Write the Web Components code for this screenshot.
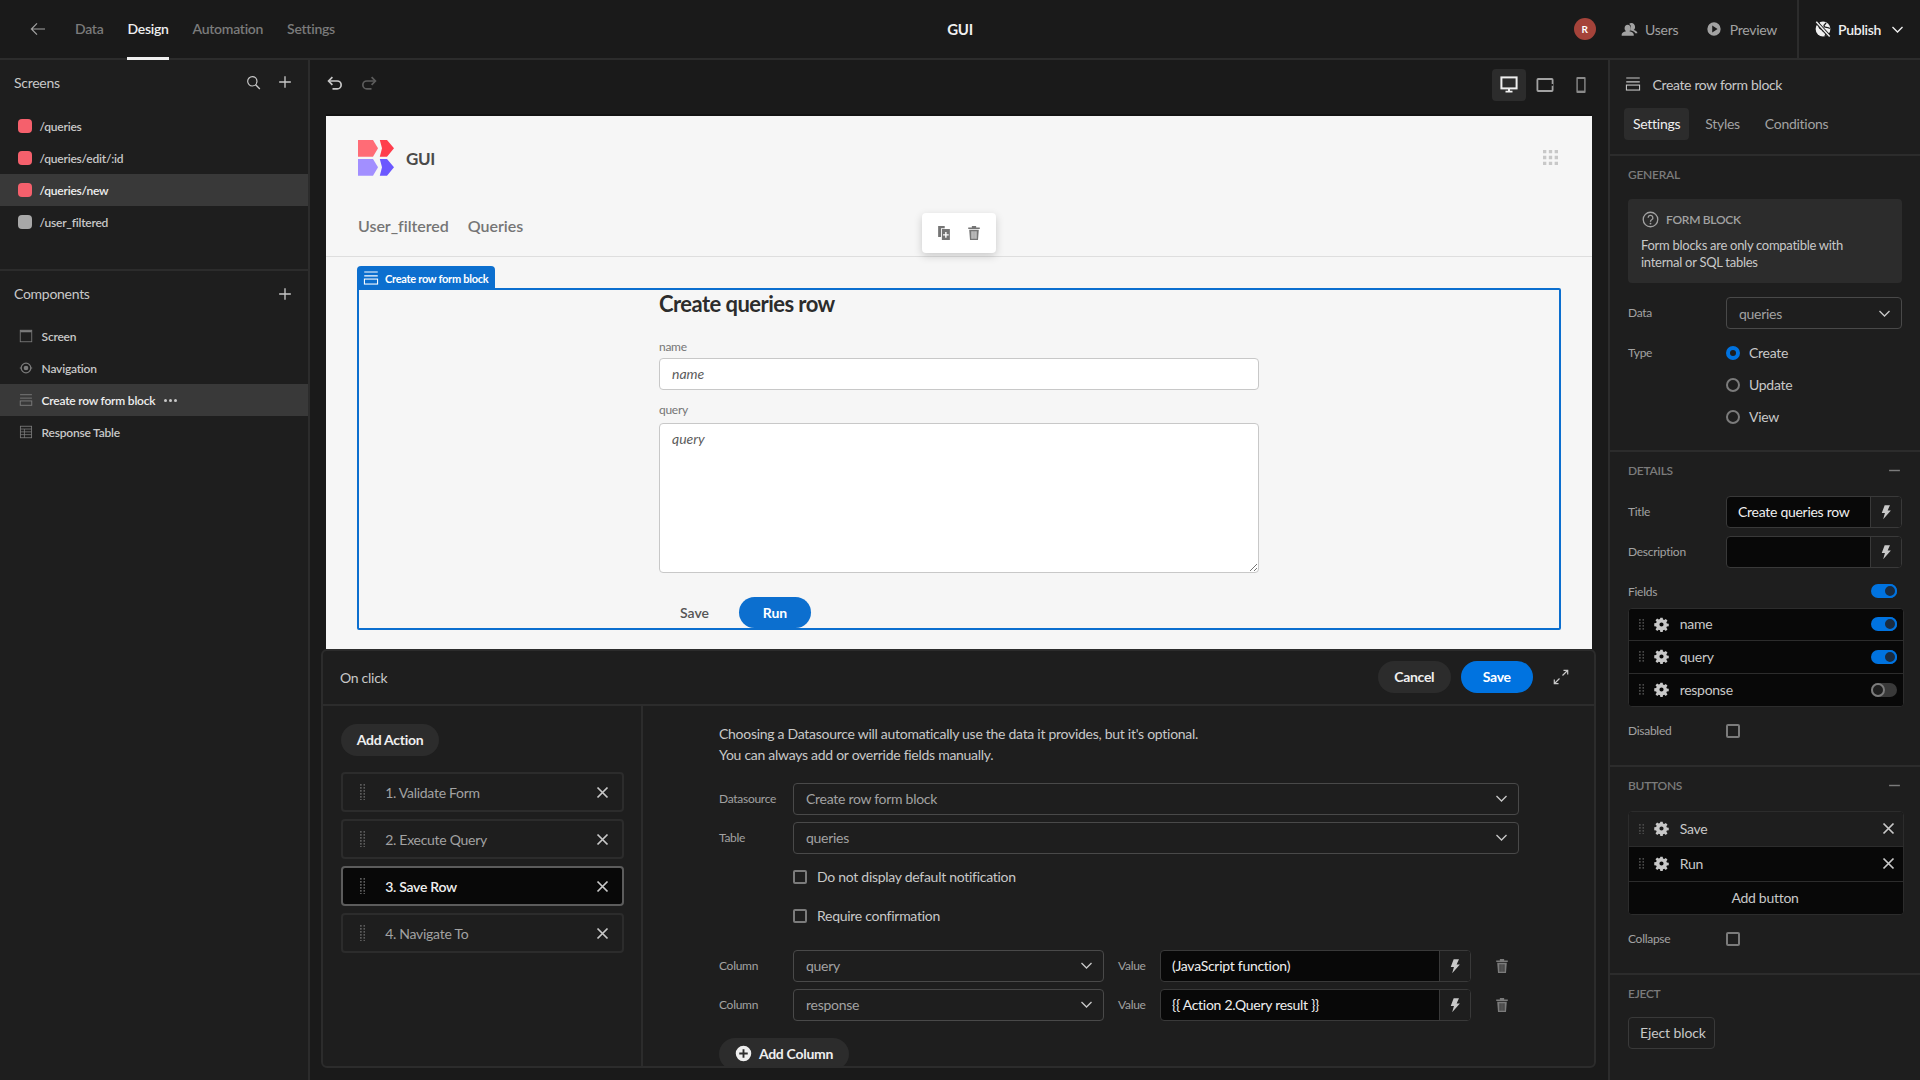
<!DOCTYPE html>
<html lang="en">
<head>
<meta charset="utf-8">
<title>GUI</title>
<style>
html,body{margin:0;padding:0;background:#1a1a1a;height:1080px;overflow:hidden}
body{font-family:Lato,"Liberation Sans",sans-serif;font-size:14px;letter-spacing:-.28px;color:#c8c8c8;-webkit-font-smoothing:antialiased}
</style>
</head>
<body>
<bb-app>
  <bb-topbar slot="top"></bb-topbar>

  <bb-side slot="left">
    <bb-side-head style="height:46px">Screens<bb-icon slot="actions" name="search" size="15"></bb-icon><bb-icon slot="actions" name="plus" size="14"></bb-icon></bb-side-head>
    <bb-tree pad="4px 0 31px" border>
      <bb-tree-row swatch="#f5606c">/queries</bb-tree-row>
      <bb-tree-row swatch="#f5606c">/queries/edit/:id</bb-tree-row>
      <bb-tree-row swatch="#f5606c" selected>/queries/new</bb-tree-row>
      <bb-tree-row swatch="#a8a8a8">/user_filtered</bb-tree-row>
    </bb-tree>
    <bb-side-head style="height:47px">Components<bb-icon slot="actions" name="plus" size="14"></bb-icon></bb-side-head>
    <bb-tree pad="2px 0 0">
      <bb-tree-row icon="window">Screen</bb-tree-row>
      <bb-tree-row icon="eye">Navigation</bb-tree-row>
      <bb-tree-row icon="form" selected more>Create row form block</bb-tree-row>
      <bb-tree-row icon="table">Response Table</bb-tree-row>
    </bb-tree>
  </bb-side>

  <bb-canvas slot="center">
    <bb-canvas-toolbar slot="toolbar"></bb-canvas-toolbar>
    <bb-preview slot="preview">
      <bb-form-block>
        <bb-field label="name"><bb-text-input>name</bb-text-input></bb-field>
        <bb-field label="query" gap="6" style="margin-top:12px"><bb-text-input area>query</bb-text-input></bb-field>
      </bb-form-block>
    </bb-preview>
    <bb-dialog slot="dialog">
      <span slot="title">On click</span>
      <bb-button slot="actions" kind="secondary">Cancel</bb-button>
      <bb-button slot="actions" kind="primary">Save</bb-button>
      <bb-icon slot="expand" name="expand" size="18"></bb-icon>

      <bb-button slot="side" kind="secondary" style="align-self:flex-start;padding:0;margin-bottom:16px;width:98px">Add Action</bb-button>
      <bb-action-row slot="side">1. Validate Form</bb-action-row>
      <bb-action-row slot="side">2. Execute Query</bb-action-row>
      <bb-action-row slot="side" selected>3. Save Row</bb-action-row>
      <bb-action-row slot="side">4. Navigate To</bb-action-row>

      <bb-note>Choosing a Datasource will automatically use the data it provides, but it's optional.<br>You can always add or override fields manually.</bb-note>
      <bb-kv label="Datasource"><bb-select>Create row form block</bb-select></bb-kv>
      <bb-kv label="Table"><bb-select>queries</bb-select></bb-kv>
      <bb-kv><bb-check>Do not display default notification</bb-check></bb-kv>
      <bb-kv><bb-check>Require confirmation</bb-check></bb-kv>
      <bb-column-row style="margin-top:11px" column="query">(JavaScript function)</bb-column-row>
      <bb-column-row column="response">{{ Action 2.Query result }}</bb-column-row>
      <bb-button kind="secondary" icon="plus-circle" style="align-self:flex-start;margin-top:10px;width:130px;padding:0">Add Column</bb-button>
    </bb-dialog>
  </bb-canvas>

  <bb-inspector slot="right">
    <bb-panel-section title="General" style="padding-bottom:17px">
      <bb-info heading="FORM BLOCK">Form blocks are only compatible with internal or SQL tables</bb-info>
      <bb-setting label="Data" style="margin-top:14px"><bb-select>queries</bb-select></bb-setting>
      <bb-setting label="Type" style="margin-top:8px">
        <bb-radio checked>Create</bb-radio>
        <bb-radio>Update</bb-radio>
        <bb-radio>View</bb-radio>
      </bb-setting>
    </bb-panel-section>
    <bb-panel-section title="Details" collapse>
      <bb-setting label="Title"><bb-binding>Create queries row</bb-binding></bb-setting>
      <bb-setting label="Description" style="margin-top:8px"><bb-binding></bb-binding></bb-setting>
      <bb-setting label="Fields" style="margin-top:8px;height:31.5px" split><bb-toggle on></bb-toggle></bb-setting>
      <bb-list>
        <bb-list-row trailing="toggle-on">name</bb-list-row>
        <bb-list-row trailing="toggle-on">query</bb-list-row>
        <bb-list-row trailing="toggle-off">response</bb-list-row>
      </bb-list>
      <bb-setting label="Disabled" style="margin-top:8px"><bb-check></bb-check></bb-setting>
    </bb-panel-section>
    <bb-panel-section title="Buttons" collapse>
      <bb-list>
        <bb-list-row trailing="x" lifted tall>Save</bb-list-row>
        <bb-list-row trailing="x" tall>Run</bb-list-row>
        <bb-list-row center>Add button</bb-list-row>
      </bb-list>
      <bb-setting label="Collapse" style="margin-top:8px"><bb-check></bb-check></bb-setting>
    </bb-panel-section>
    <bb-panel-section title="Eject" last>
      <bb-eject>Eject block</bb-eject>
    </bb-panel-section>
  </bb-inspector>
</bb-app>

<script>
const ICONS = {
  back:`<path d="M16 9H2.6M8 3.4 2.4 9 8 14.6" fill="none" stroke="currentColor" stroke-width="1.2"/>`,
  search:`<circle cx="7.6" cy="7.6" r="5.6" fill="none" stroke="currentColor" stroke-width="1.4"/><path d="M11.6 11.8 16.6 16.8" stroke="currentColor" stroke-width="1.6"/>`,
  plus:`<path d="M9 1.5v15M1.5 9h15" stroke="currentColor" stroke-width="1.7"/>`,
  undo:`<path d="M6.4 2.2 2.6 6l3.8 3.8" fill="none" stroke="currentColor" stroke-width="1.7"/><path d="M3 6h8.2a3.9 3.9 0 0 1 0 7.9H6.5" fill="none" stroke="currentColor" stroke-width="1.7"/>`,
  redo:`<path d="M11.6 2.2 15.4 6l-3.8 3.8" fill="none" stroke="currentColor" stroke-width="1.7"/><path d="M15 6H6.8a3.9 3.9 0 0 0 0 7.9h4.7" fill="none" stroke="currentColor" stroke-width="1.7"/>`,
  desktop:`<rect x="1.4" y="1.4" width="15.200" height="11" fill="none" stroke="currentColor" stroke-width="2"/><path d="M8 13h2v1.800h2.500v1.600h-7v-1.600H8z" fill="currentColor"/>`,
  tablet:`<rect x="1.4" y="3" width="15.200" height="12" rx=".8" fill="none" stroke="currentColor" stroke-width="1.800"/><rect x="15.200" y="8" width="2" height="1.800" fill="#1a1a1a"/>`,
  phone:`<rect x="4.400" y="1" width="9.200" height="16" rx="1" fill="currentColor"/><rect x="5.800" y="3" width="6.400" height="11.600" fill="#1a1a1a"/>`,
  window:`<rect x="1.6" y="1.6" width="14.8" height="14.8" fill="none" stroke="currentColor" stroke-width="1.1"/><rect x="1.6" y="1.6" width="14.8" height="2.6" fill="currentColor"/>`,
  eye:`<circle cx="9" cy="9" r="6.2" fill="none" stroke="currentColor" stroke-width="1.6"/><circle cx="9" cy="9" r="3" fill="currentColor"/><path d="M1 9h2.5M14.5 9H17" stroke="currentColor" stroke-width="1.2"/>`,
  form:`<path d="M1.4 2.2h15.2M1.4 6.6h15.2" stroke="currentColor" stroke-width="1.2"/><rect x="1.6" y="10.2" width="14.8" height="5.6" fill="none" stroke="currentColor" stroke-width="1.2"/>`,
  table:`<rect x="1.8" y="1.6" width="14.4" height="14.8" fill="none" stroke="currentColor" stroke-width="1.1"/><path d="M1.8 5.2h14.4M1.8 8.8h14.4M1.8 12.4h14.4M7 5.2v11.2" stroke="currentColor" stroke-width="1"/>`,
  users:`<path d="M11 2.2c-1 0-1.9.4-2.4 1.1 1.2.5 2 1.9 2 3.3 0 1.3-.5 2.4-1.2 3.2 3.2.6 5.4 1.9 5.6 3.2h2.4c0-1.5-1.6-2.7-4-3.4 1-.6 1.5-1.8 1.5-3.2 0-2.4-1.6-4.2-3.9-4.2z" fill="currentColor"/><path d="M7 4c2 0 3.4 1.5 3.4 3.8 0 1.3-.6 2.4-1.5 3 2.8.6 4.6 2 4.6 3.6v1.2H.7v-1.2c0-1.7 1.9-3 4.6-3.6-.9-.6-1.5-1.7-1.5-3C3.800 5.500 5.100 4 7 4z" fill="currentColor"/>`,
  play:`<path fill-rule="evenodd" fill="currentColor" d="M9 1.500a7.500 7.500 0 1 0 0 15 7.500 7.500 0 0 0 0-15zM7 5.200 13 9l-6 3.800z"/>`,
  publish:`<circle cx="9" cy="9" r="7.4" fill="currentColor"/><path d="M5 2.500c2 3-1.200 3.500.6 5.500s3 1 3.500 3.400M12 2.800c-.7 1.900-2.300 1.600-2 3.400s3.500.6 5.800 2.300M11 16c.2-1.500 1.200-2.200 3-3" fill="none" stroke="#1a1a1a" stroke-width="1.300"/><path d="M2.300 1.800 15.700 16.600" stroke="#1a1a1a" stroke-width="3.400"/><path d="M2.300 1.800 15.700 16.600" stroke="currentColor" stroke-width="1.500"/>`,
  chevron:`<path d="M3 6l6 6 6-6" fill="none" stroke="currentColor" stroke-width="1.600"/>`,
  minus:`<path d="M1.500 9h15" stroke="currentColor" stroke-width="2"/>`,
  x:`<path d="M3 3l12 12M15 3 3 15" stroke="currentColor" stroke-width="2.100"/>`,
  bolt:`<path d="M7.500 1.500H13.500L10.800 7.200H14.500L5.800 17.200 7.800 10.200H4.200z" fill="currentColor"/>`,
  trash:`<path fill="currentColor" fill-rule="evenodd" d="M6.600 1.200h4.800v1.500h4.100V4.400h-13V2.700h4.100zM3.600 5.400h10.800L13.500 17h-9zM6.300 7v8.400h1V7zM8.500 7v8.400h1V7zM10.700 7v8.400h1V7z"/>`,
  duplicate:`<path fill="currentColor" d="M2.400 1h7.400v2.600H5.600v10H2.400z"/><path fill="currentColor" fill-rule="evenodd" d="M6.600 4.600h9V17h-9zM10.300 7.800v2.500H7.900v1.500h2.400v2.500h1.600v-2.500h2.400v-1.500h-2.400V7.800z"/>`,
  question:`<circle cx="9" cy="9" r="7.700" fill="none" stroke="currentColor" stroke-width="1.400"/><path d="M6.500 7.200a2.500 2.500 0 1 1 3.700 2.100c-.9.500-1.200 1-1.200 2" fill="none" stroke="currentColor" stroke-width="1.400"/><circle cx="9" cy="13.300" r=".95" fill="currentColor"/>`,
  expand:`<path d="M10.500 7.500 15.500 2.500M11.500 2.300h4.200v4.200M7.500 10.500l-5 5M6.500 15.700H2.300v-4.200" fill="none" stroke="currentColor" stroke-width="1.200"/>`,
  'plus-circle':`<path fill="currentColor" fill-rule="evenodd" d="M9 .800a8.200 8.200 0 1 0 0 16.400A8.200 8.200 0 0 0 9 .800zM8 4.500h2V8h3.500v2H10v3.500H8V10H4.500V8H8z"/>`,
  gear:`<path fill="currentColor" fill-rule="evenodd" d="M7.600.800h2.800l.4 2.300 1.500.6 1.900-1.300 2 2-1.400 1.900.6 1.500 2.300.4v2.800l-2.300.4-.6 1.500 1.400 1.900-2 2-1.900-1.400-1.500.6-.4 2.300H7.600l-.4-2.300-1.500-.6-1.900 1.400-2-2 1.400-1.900-.6-1.500-2.300-.4V7.600l2.300-.4.6-1.500-1.400-1.900 2-2 1.900 1.300 1.500-.6zM9 6.500a2.500 2.500 0 1 0 0 5 2.500 2.500 0 0 0 0-5z"/>`,
  grid:`<path fill="currentColor" d="M0 0h4v4H0zM7 0h4v4H7zM14 0h4v4h-4zM0 7h4v4H0zM7 7h4v4H7zM14 7h4v4h-4zM0 14h4v4H0zM7 14h4v4H7zM14 14h4v4h-4z"/>`
};

function def(name, css, render){
  customElements.define(name, class extends HTMLElement{
    connectedCallback(){
      if(this.shadowRoot) return;
      const root=this.attachShadow({mode:'open'});
      root.innerHTML=`<style>:host{display:block;box-sizing:border-box}*,*::before,*::after{box-sizing:border-box}${css}</style>${render(this)}`;
    }
  });
}
const attr=(e,n,d='')=>e.getAttribute(n)??d;

def('bb-icon',`:host{display:inline-flex;flex:none;line-height:0}svg{display:block}`,e=>{
  const s=attr(e,'size','18');
  return `<svg xmlns="http://www.w3.org/2000/svg" width="${s}" height="${attr(e,'h',s)}" viewBox="0 0 18 18">${ICONS[attr(e,'name')]||''}</svg>`;
});

def('bb-grip',`:host{display:inline-flex;flex:none;line-height:0;color:#5c5c5c}`,e=>{
  const rows=+attr(e,'rows','6');let r='';
  for(let i=0;i<rows;i++){r+=`<rect x="0" y="${i*3}" width="1.700" height="1.700"/><rect x="3.500" y="${i*3}" width="1.700" height="1.700"/>`}
  return `<svg width="5.200" height="${rows*3-1.300}" fill="currentColor">${r}</svg>`;
});

def('bb-app',`:host{display:grid;grid-template:60px 1020px/310px 1fr 312px;width:1920px;height:1080px;background:#1a1a1a;overflow:hidden}
 ::slotted([slot=top]){grid-column:1/4}`,
 ()=>`<slot name="top"></slot><slot name="left"></slot><slot name="center"></slot><slot name="right"></slot>`);

def('bb-topbar',`:host{display:flex;align-items:center;height:60px;border-bottom:2px solid #2c2c2c;background:#1a1a1a;color:#7b7b7b}
 .left{display:flex;align-items:center;height:100%;flex:1}
 .left bb-icon{margin-left:29px}
 nav{display:flex;height:100%;margin-left:28px;gap:24px}
 a{display:flex;align-items:center;height:60px;font-weight:600;font-size:14px;border-bottom:2px solid transparent;padding-bottom:1px}
 a.on{color:#efefef;border-bottom:3px solid #efefef;padding-top:1px}
 .title{flex:none;font-size:15px;font-weight:700;color:#efefef;line-height:58px;width:60px;text-align:center}
 .right{flex:1;display:flex;align-items:center;justify-content:flex-end;height:100%}
 .av{width:22px;height:22px;border-radius:50%;background:#a5433a;color:#fff;font-size:10px;font-weight:700;display:flex;align-items:center;justify-content:center;margin-right:25px}
 .it{display:flex;align-items:center;gap:7.500px;color:#a2a2a2;font-size:14px}
 .it.u{margin-right:28px}.it.p{margin-right:20px}
 .pub{display:flex;align-items:center;height:100%;width:123px;border-left:2px solid #2c2c2c;padding-left:15px;color:#efefef;font-weight:600;font-size:14px;gap:6px}
 .pub .ch{margin-left:3px}`,
 ()=>`<div class="left"><bb-icon name="back" size="18" style="color:#a2a2a2"></bb-icon><nav><a>Data</a><a class="on">Design</a><a>Automation</a><a>Settings</a></nav></div>
 <div class="title">GUI</div>
 <div class="right"><div class="av">R</div>
  <div class="it u"><bb-icon name="users" size="17"></bb-icon><span>Users</span></div>
  <div class="it p"><bb-icon name="play" size="16"></bb-icon><span>Preview</span></div>
  <div class="pub"><bb-icon name="publish" size="18"></bb-icon><span>Publish</span><bb-icon class="ch" name="chevron" size="15"></bb-icon></div></div>`);

def('bb-side',`:host{display:block;width:310px;height:1020px;background:#1e1e1e;border-right:2px solid #2c2c2c}`,()=>`<slot></slot>`);

def('bb-side-head',`:host{display:flex;align-items:center;justify-content:space-between;padding:0 16px 2px 14px;font-size:14px;color:#c8c8c8}
 .a{display:flex;align-items:center;gap:17px;color:#c8c8c8}`,()=>`<span><slot></slot></span><span class="a"><slot name="actions"></slot></span>`);

def('bb-tree',`:host{display:block}`,e=>`<style>:host{padding:${attr(e,'pad')};${e.hasAttribute('border')?'border-bottom:2px solid #2c2c2c;':''}}</style><slot></slot>`);

def('bb-tree-row',`:host{display:flex;align-items:center;height:32px;font-size:12px;letter-spacing:-.22px;font-weight:600;color:#c8c8c8;padding-left:18px}
 :host([selected]){background:#393939;color:#efefef}
 .sw{width:14px;height:14px;border-radius:4px;margin-right:7.500px;flex:none}
 bb-icon{color:#7b7b7b;margin-left:1px;margin-right:8.600px}
 .more{margin-left:9px;line-height:0;display:flex;gap:2px}
 .more i{width:3px;height:3px;border-radius:50%;background:#c8c8c8;display:block}`,
 e=>`${e.hasAttribute('swatch')?`<span class="sw" style="background:${attr(e,'swatch')}"></span>`:`<bb-icon name="${attr(e,'icon')}" size="14"></bb-icon>`}<span><slot></slot></span>${e.hasAttribute('more')?`<span class="more"><i></i><i></i><i></i></span>`:''}`);

def('bb-canvas',`:host{display:flex;flex-direction:column;height:1020px;padding-bottom:12px;background:#1a1a1a}
 ::slotted([slot=preview]){margin:0 16px}
 ::slotted([slot=dialog]){margin:0 12px 0 11px;flex:1;min-height:0}`,
 ()=>`<slot name="toolbar"></slot><slot name="preview"></slot><slot name="dialog"></slot>`);

def('bb-canvas-toolbar',`:host{display:flex;align-items:center;height:56px;padding:0 10px 6px 16px;color:#c8c8c8}
 .h{display:flex;gap:16px;flex:1;margin-bottom:2px}
 .d{display:flex;gap:2px;align-items:center}
 .b{width:34px;height:32px;display:flex;align-items:center;justify-content:center;border-radius:4px;color:#a2a2a2}
 .b.on{background:#2c2c2c;color:#efefef}`,
 ()=>`<div class="h"><bb-icon name="undo" size="18"></bb-icon><bb-icon name="redo" size="18" style="color:#5c5c5c"></bb-icon></div>
 <div class="d"><div class="b on"><bb-icon name="desktop" size="18"></bb-icon></div><div class="b"><bb-icon name="tablet" size="18"></bb-icon></div><div class="b" style="color:#8a8a8a"><bb-icon name="phone" size="18"></bb-icon></div></div>`);

def('bb-preview',`:host{display:block;position:relative;height:533px;background:#f6f6f6;box-shadow:0 -2px 0 #131313;overflow:hidden;color:#333}
 header{height:141px;border-bottom:1px solid #dedede;padding:24px 34px 0 32px}
 .top{display:flex;align-items:center;height:36px}
 .logo{display:block;flex:none}
 .gui{font-size:17px;font-weight:700;color:#4a4a4a;margin-left:12px;flex:1;letter-spacing:-.3px}
 .grid{color:#c8c8c8;margin-top:-1px}
 .links{display:flex;gap:19px;margin-top:40px;font-size:16px;font-weight:600;color:#757575;line-height:20px;letter-spacing:-.03px}
 .float{position:absolute;left:596px;top:97px;width:74px;height:40px;background:#fff;border-radius:4px;box-shadow:0 3px 9px rgba(0,0,0,.18);display:flex;align-items:center;justify-content:center;gap:14px;color:#757575}
 .body{padding:31px 31px 0}`,
 ()=>`<header><div class="top">
   <svg class="logo" width="36" height="36" viewBox="0 0 36 36"><path fill="#ff6c76" d="M0 0H15L20 8.300 15 16.700H0z"/><path fill="#ff3d4c" d="M21.800 0H29L36 8.300 29 16.700H21.800L24 8.300z"/><path fill="#a28fff" d="M0 19H15L20 27.300 15 35.700H0z"/><path fill="#6b58ff" d="M21.800 19H29L36 27.300 29 35.700H21.800L24 27.300z"/></svg>
   <span class="gui">GUI</span><bb-icon class="grid" name="grid" size="15"></bb-icon></div>
   <div class="links"><span>User_filtered</span><span>Queries</span></div></header>
   <div class="body"><slot></slot></div>
   <div class="float"><bb-icon name="duplicate" size="16"></bb-icon><bb-icon name="trash" size="16"></bb-icon></div>`);

def('bb-form-block',`:host{display:block;position:relative;height:341.500px;border:2px solid #0c6fcf;border-radius:2px;border-top-left-radius:0}
 .tag{position:absolute;left:-2px;top:-24px;height:24px;width:138px;background:#0c6fcf;color:#fff;border-radius:4px 4px 0 0;display:flex;align-items:center;padding-left:6px;gap:6px;font-size:11px;font-weight:700;white-space:nowrap}
 .f{width:600px;margin:0 auto}
 h2{margin:-1px 0 20px;font-size:22px;font-weight:700;color:#2c2c2c;line-height:30px;letter-spacing:-.55px}
 .btns{display:flex;gap:9px;margin-top:24px;letter-spacing:0}
 .s{width:71px;height:31px;display:flex;align-items:center;justify-content:center;font-weight:600;color:#555;font-size:14px}
 .r{width:72px;height:31px;display:flex;align-items:center;justify-content:center;background:#0c6fcf;color:#fff;font-weight:700;border-radius:16px;font-size:14px}`,
 ()=>`<div class="tag"><bb-icon name="form" size="16"></bb-icon><span>Create row form block</span></div>
 <div class="f"><h2>Create queries row</h2><slot></slot><div class="btns"><div class="s">Save</div><div class="r">Run</div></div></div>`);

def('bb-field',`:host{display:block}label{display:block;font-size:12px;line-height:15px;color:#757575}`,
 e=>`<label style="margin-bottom:${attr(e,'gap','4')}px">${attr(e,'label')}</label><slot></slot>`);

def('bb-text-input',`:host{display:block;position:relative;height:32px;background:#fff;border:1px solid #c8c8c8;border-radius:4px;font-style:italic;color:#5c5c5c;font-size:14px;line-height:30px;padding-left:12px;letter-spacing:0}
 :host([area]){height:149.500px;line-height:18px;padding-top:6px}
 svg{position:absolute;right:1px;bottom:1px}`,
 e=>`<slot></slot>${e.hasAttribute('area')?`<svg width="8" height="8"><path d="M1 8 8 1M5 8l3-3" stroke="#757575"/></svg>`:''}`);

def('bb-dialog',`:host{display:flex;flex-direction:column;background:#1e1e1e;border:2px solid #2c2c2c;border-radius:6px;overflow:hidden;color:#c8c8c8}
 .head{display:flex;align-items:center;height:55px;flex:none;border-bottom:2px solid #2c2c2c;padding:0 24px 1px 17px;font-size:14px}
 .t{flex:1}.acts{display:flex;gap:10px;margin-right:19px}.exp{color:#c8c8c8;line-height:0}
 .body{display:flex;flex:1;min-height:0}
 .side{width:320px;flex:none;border-right:2px solid #2c2c2c;padding:18px 17px 0 18px;display:flex;flex-direction:column}
 .main{flex:1;padding:18px 0 0 76px;display:flex;flex-direction:column;min-width:0}`,
 ()=>`<div class="head"><span class="t"><slot name="title"></slot></span><span class="acts"><slot name="actions"></slot></span><span class="exp"><slot name="expand"></slot></span></div>
 <div class="body"><div class="side"><slot name="side"></slot></div><div class="main"><slot></slot></div></div>`);

def('bb-button',`:host{display:inline-flex;align-items:center;justify-content:center;height:32px;flex:none;width:72.500px;border-radius:16px;font-size:14px;font-weight:700;gap:7px;color:#efefef}
 :host([kind=secondary]){background:#2c2c2c}
 :host([kind=primary]){background:#0073e0;color:#fff}
 span{margin-top:-1px}`,
 e=>`${e.hasAttribute('icon')?`<bb-icon name="${attr(e,'icon')}" size="17"></bb-icon>`:''}<span><slot></slot></span>`);

def('bb-action-row',`:host{display:flex;align-items:center;height:40px;margin-bottom:7px;border:2px solid #2c2c2c;border-radius:4px;color:#a2a2a2;font-size:14px;padding:0 12px 0 17px}
 :host([selected]){background:#080808;border-color:#5c5c5c;color:#efefef;font-weight:600}
 span{flex:1;margin-left:20px}bb-icon{color:#c8c8c8}bb-grip{color:#5c5c5c}`,
 ()=>`<bb-grip rows="6"></bb-grip><span><slot></slot></span><bb-icon name="x" size="15"></bb-icon>`);

def('bb-note',`:host{display:block;font-size:14px;line-height:20.800px;color:#c8c8c8;margin-bottom:17px}`,()=>`<slot></slot>`);

def('bb-kv',`:host{display:flex;align-items:center;height:32px;margin-bottom:7px;width:800px;flex:none}
 label{width:74px;flex:none;font-size:12px;color:#a2a2a2}
 .v{flex:1;min-width:0}`,e=>`<label>${attr(e,'label')}</label><div class="v"><slot></slot></div>`);

def('bb-select',`:host{display:flex;align-items:center;height:32px;border:1px solid #494949;border-radius:4px;padding:0 9.500px 0 12px;font-size:14px;color:#a2a2a2;background:#1e1e1e}
 span{flex:1}bb-icon{color:#c8c8c8}`,()=>`<span><slot></slot></span><bb-icon name="chevron" size="15"></bb-icon>`);

def('bb-check',`:host{display:inline-flex;align-items:center;gap:10px;font-size:14px;color:#c8c8c8;height:32px}
 i{display:block;width:14px;height:14px;border:2px solid #7b7b7b;border-radius:2px;flex:none}
 span{margin-top:-1px}`,()=>`<i></i><span><slot></slot></span>`);

def('bb-column-row',`:host{display:flex;align-items:center;height:32px;margin-bottom:7px;flex:none}
 label{width:74px;flex:none;font-size:12px;color:#a2a2a2}
 bb-select{width:311px;flex:none}
 .val{margin-left:14px;width:42px;flex:none;font-size:12px;color:#a2a2a2}
 bb-binding{width:311px;flex:none}
 bb-icon{margin-left:23px;color:#7b7b7b}`,
 e=>`<label>Column</label><bb-select>${attr(e,'column')}</bb-select><span class="val">Value</span><bb-binding><slot></slot></bb-binding><bb-icon name="trash" size="16"></bb-icon>`);

def('bb-binding',`:host{display:flex;height:32px;border:1px solid #393939;border-radius:4px;overflow:hidden;font-size:14px;color:#efefef;background:#080808}
 span{flex:1;padding-left:11px;line-height:29px;white-space:nowrap}
 b{width:31px;flex:none;border-left:1px solid #393939;background:#1e1e1e;display:flex;align-items:center;justify-content:center;color:#c8c8c8}`,
 ()=>`<span><slot></slot></span><b><bb-icon name="bolt" size="16"></bb-icon></b>`);

def('bb-inspector',`:host{display:block;width:312px;height:1020px;background:#1e1e1e;border-left:2px solid #2c2c2c;overflow:hidden}
 .h{display:flex;align-items:center;height:48px;padding-left:15px;gap:11.500px;font-size:14px;letter-spacing:-.35px;color:#c8c8c8}
 .tabs{display:flex;padding:0 0 14px 14px;border-bottom:2px solid #2c2c2c;font-size:14px;color:#a2a2a2;align-items:center;gap:16px;box-sizing:content-box;height:32px}
 .tabs span{height:32px;line-height:32px;padding:0 9px 0 9px}
 .tabs .on{background:#2c2c2c;color:#efefef;border-radius:4px}
 .tabs span+span{margin-left:-9px}`,
 ()=>`<div class="h"><bb-icon name="form" size="16"></bb-icon><span>Create row form block</span></div>
 <div class="tabs"><span class="on">Settings</span><span>Styles</span><span>Conditions</span></div><slot></slot>`);

def('bb-panel-section',`:host{display:block;padding:11px 18px 18px;border-bottom:2px solid #2c2c2c}
 :host([last]){border:0}
 .t{display:flex;align-items:center;justify-content:space-between;height:14px;margin-bottom:19px;font-size:12px;font-weight:600;text-transform:uppercase;color:#7b7b7b}
 bb-icon{color:#7b7b7b;margin-right:1px}`,
 e=>`<div class="t"><span>${attr(e,'title')}</span>${e.hasAttribute('collapse')?`<bb-icon name="minus" size="13"></bb-icon>`:''}</div><slot></slot>`);

def('bb-info',`:host{display:block;background:#2c2c2c;border-radius:4px;height:84px;padding:11px 13px;color:#c8c8c8;font-size:13px;line-height:17px;margin-top:-1px}
 .h{display:flex;align-items:center;gap:7px;font-size:12px;font-weight:600;color:#a2a2a2;height:18px;margin-bottom:9px;padding-left:1px}
 .b{max-width:212px}`,
 e=>`<div class="h"><bb-icon name="question" size="17"></bb-icon><span>${attr(e,'heading')}</span></div><div class="b"><slot></slot></div>`);

def('bb-setting',`:host{display:grid;grid-template-columns:98px 1fr;align-items:start;font-size:12px}
 label{color:#a2a2a2;line-height:32px}
 .v{min-width:0;display:block;font-size:14px}
 :host([split]) .v{display:flex;justify-content:flex-end;padding:8px 5px 0 0}`,
 e=>`<label>${attr(e,'label')}</label><div class="v"><slot></slot></div>`);

def('bb-radio',`:host{display:flex;align-items:center;height:32px;gap:9px;font-size:14px;color:#c8c8c8}
 i{display:block;width:14px;height:14px;border-radius:50%;border:2px solid #7b7b7b;flex:none}
 :host([checked]) i{border:4.500px solid #0073e0;background:#1e1e1e}
 span{margin-top:-2px}`,()=>`<i></i><span><slot></slot></span>`);

def('bb-toggle',`:host{display:block;width:26px;height:14px;border-radius:7px;background:#393939;position:relative}
 :host([on]){background:#0073e0}
 i{position:absolute;left:0;top:0;width:14px;height:14px;border-radius:50%;border:2px solid #7b7b7b;background:#1e1e1e}
 :host([on]) i{left:12px;border-color:#0073e0;background:#1a2b3f}`,()=>`<i></i>`);

def('bb-list',`:host{display:block;margin-right:-2px;border:1px solid #2c2c2c;border-radius:4px;overflow:hidden;background:#080808}
 ::slotted(*:not(:last-child)){border-bottom:1px solid #2c2c2c}`,()=>`<slot></slot>`);

def('bb-list-row',`:host{display:flex;align-items:center;height:32.500px;padding:0 6px 0 10px;font-size:14px;color:#c8c8c8;background:#080808}
 :host([tall]){height:34.800px}
 :host([lifted]){background:#1e1e1e}
 :host([center]){justify-content:center;padding:0 2px 0 0;height:32.500px;color:#c8c8c8}
 span{flex:1;margin-left:10.500px;margin-top:-1px}
 bb-grip{color:#494949}
 .g{margin-left:10px;color:#c8c8c8}
 .x{color:#c8c8c8;margin-right:1px}`,
 e=>{
  if(e.hasAttribute('center')) return `<slot></slot>`;
  const t=attr(e,'trailing');
  const tail=t==='x'?`<bb-icon class="x" name="x" size="15"></bb-icon>`:`<bb-toggle ${t==='toggle-on'?'on':''}></bb-toggle>`;
  return `<bb-grip rows="4"></bb-grip><bb-icon class="g" name="gear" size="15"></bb-icon><span><slot></slot></span>${tail}`;
 });

def('bb-eject',`:host{display:inline-flex;align-items:center;height:32px;padding:0 11px 1px;border:1px solid #393939;border-radius:4px;font-size:14px;color:#c8c8c8;margin-top:-2px;width:87px;white-space:nowrap;letter-spacing:-.1px}`,()=>`<slot></slot>`);
</script>
</body>
</html>
